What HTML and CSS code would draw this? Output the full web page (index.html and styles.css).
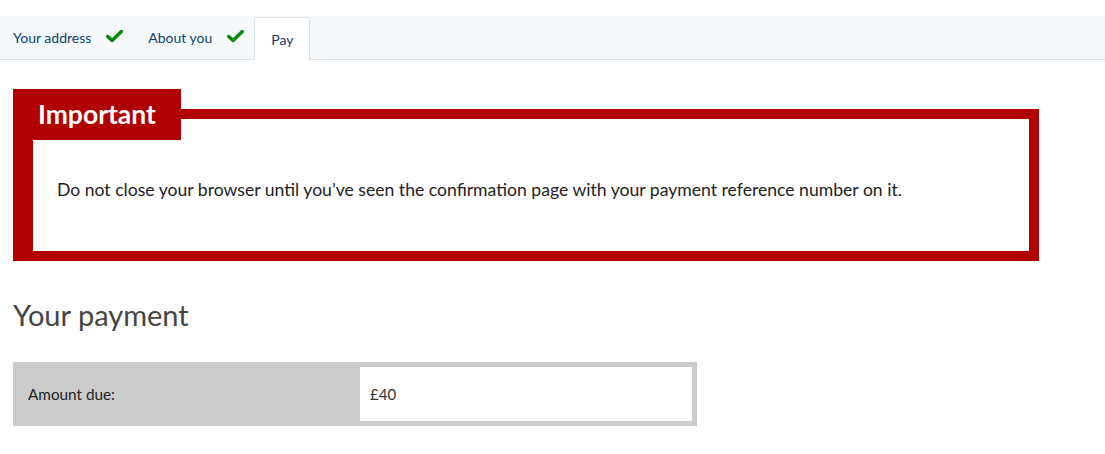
FILE: index.html
```html
<!DOCTYPE html>
<html lang="en">
<head>
<meta charset="utf-8">
<title>Pay</title>
<link rel="stylesheet" href="styles.css">
</head>
<body>
<nav class="tabs">
  <ul class="tab-list">
    <li class="tab done">Your address <svg class="tick" viewBox="0 0 18 14" width="17" height="14"><path d="M1.8 7.5 L6.5 11.8 L16.2 2.2" fill="none" stroke="#008a00" stroke-width="3.6" stroke-linecap="round" stroke-linejoin="round"/></svg></li>
    <li class="tab done">About you <svg class="tick" viewBox="0 0 18 14" width="17" height="14"><path d="M1.8 7.5 L6.5 11.8 L16.2 2.2" fill="none" stroke="#008a00" stroke-width="3.6" stroke-linecap="round" stroke-linejoin="round"/></svg></li>
    <li class="tab current">Pay</li>
  </ul>
</nav>
<main class="content">
  <section class="important">
    <h2 class="important-label">Important</h2>
    <div class="important-body">
      <p>Do not close your browser until you’ve seen the confirmation page with your payment reference number on it.</p>
    </div>
  </section>
  <h1 class="heading">Your payment</h1>
  <table class="summary">
    <tr>
      <th>Amount due:</th>
      <td>£40</td>
    </tr>
  </table>
</main>
</body>
</html>
```
FILE: styles.css
```css
* { box-sizing: border-box; }
html, body { margin: 0; padding: 0; background: #fff; }
body {
  font-family: "Lato", "Liberation Sans", sans-serif;
  color: #222;
}
.tabs {
  margin-top: 16px;
  background: #f5f9fc;
  border-bottom: 1px solid #dbe3ea;
  height: 44px;
}
.tab-list {
  list-style: none;
  margin: 0;
  padding: 0;
  display: flex;
  height: 43px;
}
.tab {
  display: flex;
  align-items: center;
  font-size: 14px;
  color: #0b3f6e;
  padding: 0 10px 0 13px;
  height: 43px;
}
.tab.done { gap: 15px; }
.tab.done + .tab.done { padding-left: 15px; }
.tick { display: block; margin-top: -3px; }
.tab.current {
  margin-top: 1px;
  height: 43px;
  padding: 0 15px 0 16px;
  background: #fff;
  border: 1px solid #dbe3ea;
  border-bottom: none;
  border-radius: 3px 3px 0 0;
}
.content { padding: 29px 13px 0 13px; }
.important {
  width: 1026px;
  position: relative;
  padding-top: 20px;
}
.important-label {
  position: absolute;
  top: 0;
  left: 0;
  margin: 0;
  width: 168px;
  height: 51px;
  background: #b00000;
  color: #fff;
  font-size: 26.5px;
  font-weight: 700;
  padding: 10px 0 0 25px;
  line-height: 1.2;
}
.important-body {
  border: 10px solid #b00000;
  border-left-width: 20px;
  height: 152px;
  padding: 59px 0 0 24px;
}
.important-body p {
  margin: 0;
  font-size: 17.6px;
  line-height: 24px;
}
.heading {
  margin: 36px 0 0 0;
  font-size: 29px;
  font-weight: 400;
  color: #454545;
  line-height: 36px;
}
.summary {
  margin-top: 29px;
  width: 684px;
  background: #cccccc;
  border-spacing: 5px;
}
.summary th {
  width: 337px;
  text-align: left;
  font-weight: 400;
  font-size: 15.3px;
  padding: 0 10px;
  height: 54px;
  background: #cccccc;
}
.summary td {
  background: #fff;
  font-size: 15px;
  color: #333;
  padding: 0 10px;
  height: 54px;
}
```
